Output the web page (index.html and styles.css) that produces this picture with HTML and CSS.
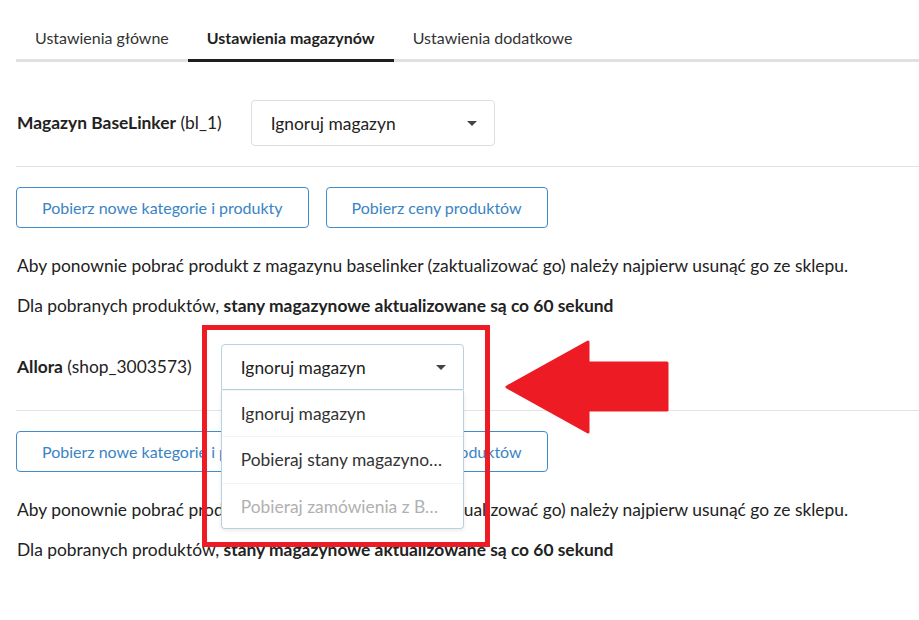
FILE: index.html
```html
<!DOCTYPE html>
<html lang="pl">
<head>
<meta charset="utf-8">
<title>Ustawienia magazynów</title>
<link rel="stylesheet" href="styles.css">
</head>
<body>
<div class="page">
  <nav class="tabs">
    <a class="tab">Ustawienia główne</a>
    <a class="tab active">Ustawienia magazynów</a>
    <a class="tab">Ustawienia dodatkowe</a>
  </nav>

  <section class="section first">
    <div class="row">
      <div class="label"><b>Magazyn BaseLinker</b> (bl_1)</div>
      <div class="select">
        <span class="select-value">Ignoruj magazyn</span>
        <span class="caret"></span>
      </div>
    </div>
    <div class="buttons">
      <button class="btn">Pobierz nowe kategorie i produkty</button>
      <button class="btn">Pobierz ceny produktów</button>
    </div>
    <p class="note">Aby ponownie pobrać produkt z magazynu baselinker (zaktualizować go) należy najpierw usunąć go ze sklepu.</p>
    <p class="note">Dla pobranych produktów, <b>stany magazynowe aktualizowane są co 60 sekund</b></p>
  </section>

  <section class="section second">
    <div class="row">
      <div class="label"><b>Allora</b> (shop_3003573)</div>
      <div class="select open">
        <span class="select-value">Ignoruj magazyn</span>
        <span class="caret"></span>
        <ul class="menu">
          <li class="item">Ignoruj magazyn</li>
          <li class="item">Pobieraj stany magazynowe z BaseLinkera</li>
          <li class="item disabled">Pobieraj zamówienia z BaseLinkera</li>
        </ul>
      </div>
    </div>
    <div class="buttons">
      <button class="btn">Pobierz nowe kategorie i produkty</button>
      <button class="btn">Pobierz ceny produktów</button>
    </div>
    <p class="note">Aby ponownie pobrać produkt z magazynu baselinker (zaktualizować go) należy najpierw usunąć go ze sklepu.</p>
    <p class="note">Dla pobranych produktów, <b>stany magazynowe aktualizowane są co 60 sekund</b></p>
  </section>

  <div class="highlight-box"></div>
  <svg class="highlight-arrow" width="180" height="110" viewBox="0 0 180 110">
    <polygon points="3,47 84,2 84,23 163,23 163,70 84,70 84,92" fill="#ed1c24" stroke="#ed1c24" stroke-width="3" stroke-linejoin="round"/>
  </svg>
</div>
</body>
</html>
```

FILE: styles.css
```css
* { box-sizing: border-box; }

html, body {
  margin: 0;
  padding: 0;
  background: #ffffff;
}

body {
  font-family: Lato, "Open Sans", "Liberation Sans", sans-serif;
  color: #222222;
  width: 919px;
  height: 620px;
  overflow: hidden;
}

.page {
  position: relative;
  padding-left: 16px;
}

.tabs {
  display: flex;
  border-bottom: 3px solid #e1e1e1;
}

.tab {
  display: block;
  padding: 27px 19px 10px;
  font-size: 16px;
  line-height: 22px;
  color: #333333;
  margin-bottom: -3px;
  border-bottom: 3px solid transparent;
}

.tab.active {
  font-weight: 700;
  color: #1f1f1f;
  border-bottom-color: #1e1e1e;
}

.section.first { margin-top: 38px; }
.section.second { margin-top: 26px; }

.row {
  display: flex;
  align-items: center;
  gap: 29px;
  padding: 0 0 20px 1px;
  border-bottom: 1px solid #e3e3e3;
}

.label {
  font-size: 17.4px;
  line-height: 24px;
  color: #222222;
}

.label b { font-weight: 700; }

.select {
  position: relative;
  display: flex;
  align-items: center;
  justify-content: space-between;
  width: 244px;
  height: 46px;
  padding: 0 17px 0 19px;
  border: 1px solid #dedede;
  border-radius: 4px;
  font-size: 17.4px;
  color: #222222;
  background: #ffffff;
}

.select.open {
  width: 243px;
  border-color: #b7d2e2;
  border-radius: 4px 4px 0 0;
}

.caret {
  width: 0;
  height: 0;
  border-left: 5px solid transparent;
  border-right: 5px solid transparent;
  border-top: 5px solid #444444;
}

.menu {
  position: absolute;
  left: -1px;
  right: -1px;
  top: 45px;
  margin: 0;
  padding: 0;
  list-style: none;
  background: #ffffff;
  border: 1px solid #b7d2e2;
  border-top: 1px solid #f2f2f2;
  border-radius: 0 0 4px 4px;
  box-shadow: 0 2px 4px rgba(0, 0, 0, 0.08);
  z-index: 2;
}

.item {
  height: 47px;
  line-height: 46px;
  padding: 0 20px 0 19px;
  font-size: 17.4px;
  color: #333333;
  white-space: nowrap;
  overflow: hidden;
  text-overflow: ellipsis;
  border-bottom: 1px solid #f3f3f3;
}

.item:first-child {
  height: 46px;
  line-height: 45px;
}

.item:last-child {
  border-bottom: none;
  height: 44px;
}

.item.disabled { color: #b0b0b0; }

.buttons {
  display: flex;
  gap: 17px;
  margin-top: 20px;
}

.btn {
  height: 41px;
  padding: 0 25px;
  font-family: inherit;
  font-size: 16px;
  color: #3a84c4;
  background: #ffffff;
  border: 1px solid #3f8cce;
  border-radius: 4px;
}

.note {
  margin: 16px 0 0 1px;
  font-size: 17.4px;
  line-height: 24px;
  color: #222222;
}

.buttons + .note { margin-top: 26px; }

.note b { font-weight: 700; }

.highlight-box {
  position: absolute;
  left: 202px;
  top: 325px;
  width: 288px;
  height: 222px;
  border: 5px solid #ed1c24;
  z-index: 3;
}

.highlight-arrow {
  position: absolute;
  left: 504px;
  top: 340px;
  z-index: 3;
}
```
